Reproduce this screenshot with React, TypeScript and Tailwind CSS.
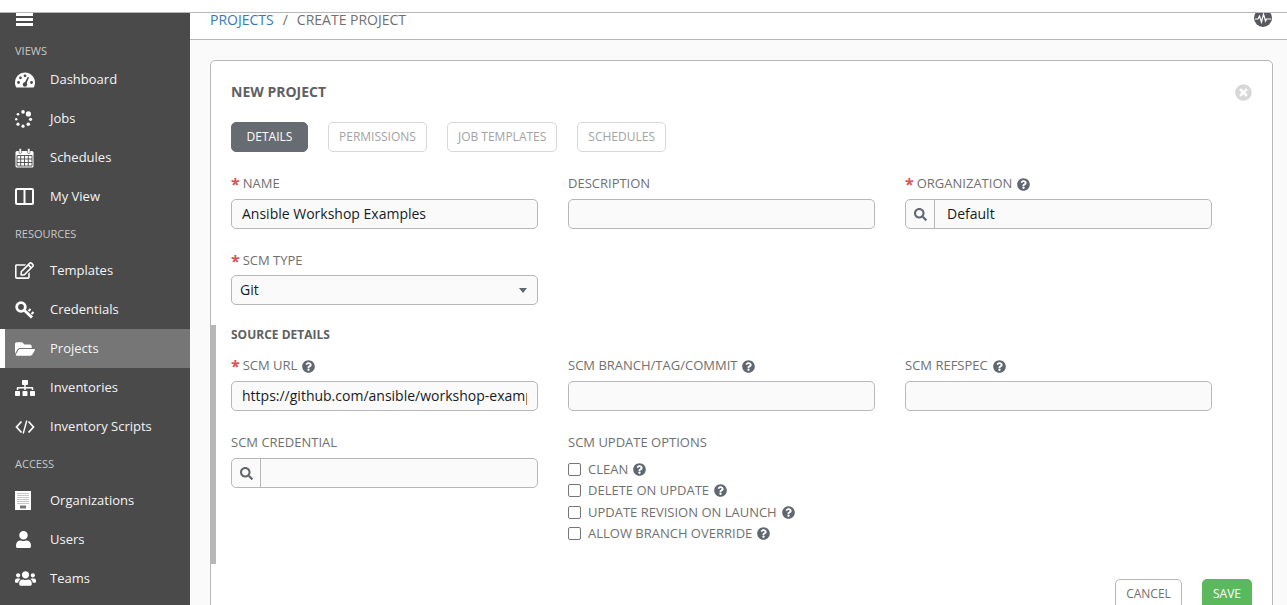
import type { ReactNode } from "react";
import {
  FaFolderOpen,
  FaQuestionCircle,
  FaRegEdit,
  FaSearch,
  FaSitemap,
  FaTimesCircle,
  FaUser,
  FaUsers,
} from "react-icons/fa";

function GaugeIcon() {
  return (
    <svg width="20" height="16" viewBox="0 0 20 16">
      <path d="M10 0.500C4.500 0.500 0 5 0 10.500C0 12.500 0.500 14.300 1.400 15.500H18.600C19.500 14.300 20 12.500 20 10.500C20 5 15.500 0.500 10 0.500Z" fill="#fff" />
      <g fill="#4a4a4a">
        <circle cx="3.500" cy="10.500" r="1.400" />
        <circle cx="5.500" cy="5.800" r="1.400" />
        <circle cx="10" cy="3.800" r="1.400" />
        <circle cx="16.500" cy="10.500" r="1.400" />
        <circle cx="10" cy="12.500" r="2.200" />
        <path d="M9 12L12.800 4.800L14 5.400L11 12.800Z" />
      </g>
    </svg>
  );
}

function SpinnerIcon() {
  return (
    <svg width="18" height="18" viewBox="0 0 18 18" fill="#fff">
      <circle cx="8" cy="1.900" r="1.800" />
      <circle cx="13.400" cy="3.900" r="2.600" />
      <circle cx="15.500" cy="9.300" r="1.600" />
      <circle cx="13.300" cy="14.200" r="1.800" />
      <circle cx="8" cy="16.200" r="1.600" />
      <circle cx="3" cy="14.200" r="1.600" />
      <circle cx="1.200" cy="9.300" r="1.200" />
      <circle cx="3" cy="4.300" r="1.300" />
    </svg>
  );
}

function CalendarIcon() {
  return (
    <svg width="19" height="20" viewBox="0 0 19 20" fill="none">
      <rect x="0.5" y="3" width="18" height="16.5" rx="1.5" fill="#fff" />
      <rect x="4" y="0.5" width="2.5" height="5" rx="1" fill="#fff" stroke="#4a4a4a" strokeWidth="0.6" />
      <rect x="12.5" y="0.5" width="2.5" height="5" rx="1" fill="#fff" stroke="#4a4a4a" strokeWidth="0.6" />
      <path
        d="M2 7.5h15v10.5h-15zM2 11h15M2 14.5h15M5.7 7.5v10.5M9.5 7.5v10.5M13.3 7.5v10.5"
        stroke="#4a4a4a"
        strokeWidth="0.9"
      />
    </svg>
  );
}

function ColumnsIcon() {
  return (
    <svg width="19" height="17" viewBox="0 0 19 17" fill="none">
      <rect x="1" y="1" width="17" height="15" rx="1" stroke="#fff" strokeWidth="2" />
      <path d="M9.5 1v15" stroke="#fff" strokeWidth="2" />
    </svg>
  );
}

function KeyIcon() {
  return (
    <svg width="19" height="18" viewBox="0 0 19 18" fill="none">
      <circle cx="6" cy="6" r="4.300" stroke="#fff" strokeWidth="2.800" />
      <path d="M9 9L17 16.500" stroke="#fff" strokeWidth="3" />
      <path d="M13.500 10L15.500 8M16.500 13L18.500 11" stroke="#fff" strokeWidth="2" />
    </svg>
  );
}

function CodeIcon() {
  return (
    <svg width="20" height="14" viewBox="0 0 20 14" fill="none" stroke="#fff" strokeWidth="1.700">
      <path d="M6.500 1.500L1.500 7L6.500 12.500" />
      <path d="M13.500 1.500L18.500 7L13.500 12.500" />
      <path d="M11.800 0.500L8.200 13.500" strokeWidth="1.400" />
    </svg>
  );
}

function BuildingIcon() {
  return (
    <svg width="16" height="19" viewBox="0 0 16 19">
      <rect width="16" height="19" fill="#fff" />
      <path
        d="M2.500 2.500h11M2.500 4.500h11M2.500 6.500h11M2.500 8.500h11M2.500 10.500h11M2.500 12.500h11"
        stroke="#8a8a8a"
        strokeWidth="1"
        strokeDasharray="1 1"
      />
      <rect x="5" y="14.500" width="6" height="3" fill="#777" />
    </svg>
  );
}

function PulseIcon() {
  return (
    <svg width="18" height="18" viewBox="0 0 18 18" className="block">
      <circle cx="9" cy="9" r="9" fill="#58595f" />
      <path d="M1 10h3l1.500-3 2 6 2-8 2 7 1-2h4.500" fill="none" stroke="#fff" strokeWidth="1.200" />
    </svg>
  );
}

function SectionLabel({ children, className }: { children: ReactNode; className: string }) {
  return <div className={`px-[15px] text-[11px] leading-[16px] text-[#c8c8c8] ${className}`}>{children}</div>;
}

function NavItem({ icon, label, active }: { icon: ReactNode; label: string; active?: boolean }) {
  return (
    <div
      className={`flex h-[39px] items-center text-[13px] text-[#f4f4f4] ${
        active ? "border-l-[5px] border-white bg-[#767676] pl-[10px]" : "pl-[15px]"
      }`}
    >
      <span className="flex w-[35px] shrink-0 items-center">{icon}</span>
      <span>{label}</span>
    </div>
  );
}

function Help() {
  return <FaQuestionCircle className="ml-[5px] inline-block text-[13px] text-[#606770]" />;
}

function Label({ text, required, help }: { text: string; required?: boolean; help?: boolean }) {
  return (
    <div className="flex h-[16px] items-center text-[13px] text-[#707070]">
      {required && <span className="mr-[3px] text-[16px] font-bold leading-none text-[#d9534f]">*</span>}
      <span>{text}</span>
      {help && <Help />}
    </div>
  );
}

function TextField({ value }: { value?: string }) {
  return (
    <input
      readOnly
      value={value ?? ""}
      className="mt-[7px] block h-[30px] w-full rounded-[5px] border border-[#b7b7b7] bg-[#fafafa] px-[10px] pb-[2px] text-[14px] text-[#161b1f] outline-none"
    />
  );
}

function Lookup({ value }: { value?: string }) {
  return (
    <div className="mt-[7px] flex h-[30px] rounded-[5px] border border-[#b7b7b7] bg-[#fafafa]">
      <span className="flex w-[29px] shrink-0 items-center justify-center border-r border-[#b7b7b7]">
        <FaSearch className="text-[13px] text-[#606770]" />
      </span>
      <span className="flex items-center pb-[2px] pl-[12px] text-[14px] text-[#161b1f]">{value}</span>
    </div>
  );
}

function Tab({ label, active }: { label: string; active?: boolean }) {
  return (
    <span
      className={`flex h-[30px] items-center justify-center rounded-[5px] border text-[12px] ${
        active ? "w-[77px] border-[#676b72] bg-[#676b72] text-white" : "border-[#d7d7d7] bg-white px-[10px] text-[#a3a3a3]"
      }`}
    >
      {label}
    </span>
  );
}

function Option({ label }: { label: string }) {
  return (
    <label className="flex h-[21.500px] items-center text-[13px] text-[#707070]">
      <input type="checkbox" className="mr-[7px] size-[13px] appearance-none rounded-[2px] border border-[#767676] bg-white" />
      <span>{label}</span>
      <Help />
    </label>
  );
}

export default function App() {
  return (
    <div className="flex h-[605px] flex-col overflow-hidden bg-white font-['Open_Sans',sans-serif]">
      <div className="h-[13px] shrink-0 border-b border-[#b7b7b7] bg-white" />
      <div className="flex min-h-0 flex-1">
        <aside className="w-[190px] shrink-0 bg-[#4a4a4a]">
          <div className="ml-[16px] flex h-[13px] w-[17px] flex-col gap-[2px]">
            <span className="h-[3px] bg-white" />
            <span className="h-[3px] bg-white" />
            <span className="h-[3px] bg-white" />
          </div>
          <SectionLabel className="mt-[17px]">VIEWS</SectionLabel>
          <div className="mt-[1px]">
            <NavItem icon={<GaugeIcon />} label="Dashboard" />
            <NavItem icon={<SpinnerIcon />} label="Jobs" />
            <NavItem icon={<CalendarIcon />} label="Schedules" />
            <NavItem icon={<ColumnsIcon />} label="My View" />
          </div>
          <SectionLabel className="mt-[10px]">RESOURCES</SectionLabel>
          <div className="mt-[9px]">
            <NavItem icon={<FaRegEdit className="text-[19px] text-white" />} label="Templates" />
            <NavItem icon={<KeyIcon />} label="Credentials" />
            <NavItem active icon={<FaFolderOpen className="text-[20px] text-white" />} label="Projects" />
            <NavItem icon={<FaSitemap className="text-[20px] text-white" />} label="Inventories" />
            <NavItem icon={<CodeIcon />} label="Inventory Scripts" />
          </div>
          <SectionLabel className="mt-[10px]">ACCESS</SectionLabel>
          <div className="mt-[9px]">
            <NavItem icon={<BuildingIcon />} label="Organizations" />
            <NavItem icon={<FaUser className="text-[17px] text-white" />} label="Users" />
            <NavItem icon={<FaUsers className="text-[21px] text-white" />} label="Teams" />
          </div>
        </aside>
        <main className="min-w-0 flex-1 bg-[#fafafa]">
          <div className="flex h-[27px] justify-between border-b border-[#b7b7b7] bg-white pl-[20px] pr-[15px] text-[14px] leading-[14px]">
            <div className="flex h-[14px] items-center">
              <span className="text-[#337ab7]">PROJECTS</span>
              <span className="mx-[9px] text-[#707070]">/</span>
              <span className="text-[#707070]">CREATE PROJECT</span>
            </div>
            <div className="h-[26px] overflow-hidden">
              <div className="-mt-[4px]">
                <PulseIcon />
              </div>
            </div>
          </div>
          <div className="ml-[20px] mr-[14px] mt-[20px] rounded-t-[5px] border border-[#b7b7b7] bg-white px-[20px] pb-[20px] pt-[21px]">
            <div className="flex items-center justify-between">
              <h2 className="text-[14px] font-bold leading-[20px] text-[#606060]">NEW PROJECT</h2>
              <FaTimesCircle className="text-[17px] text-[#d7d7d7]" />
            </div>
            <div className="mt-[20px] flex gap-[20px]">
              <Tab active label="DETAILS" />
              <Tab label="PERMISSIONS" />
              <Tab label="JOB TEMPLATES" />
              <Tab label="SCHEDULES" />
            </div>
            <div className="mt-[24px] grid w-[981px] grid-cols-[307px_307px_307px] gap-x-[30px]">
              <div>
                <Label required text="NAME" />
                <TextField value="Ansible Workshop Examples" />
              </div>
              <div>
                <Label text="DESCRIPTION" />
                <TextField />
              </div>
              <div>
                <Label required help text="ORGANIZATION" />
                <Lookup value="Default" />
              </div>
            </div>
            <div className="mt-[24px] w-[307px]">
              <Label required text="SCM TYPE" />
              <div className="relative mt-[6px]">
                <select className="block h-[30px] w-full appearance-none rounded-[5px] border border-[#b7b7b7] bg-[#fafafa] px-[8px] pb-[2px] text-[14px] text-[#161b1f] outline-none">
                  <option>Git</option>
                </select>
                <span className="absolute right-[11px] top-[13px] border-x-[4px] border-t-[5px] border-x-transparent border-t-[#606770]" />
              </div>
            </div>
            <section className="-ml-[20px] mt-[20px] h-[239px] border-l-[5px] border-[#b7b7b7] pl-[15px] pt-[2px]">
              <h3 className="text-[12px] font-bold leading-[16px] text-[#606060]">SOURCE DETAILS</h3>
              <div className="mt-[15px] grid w-[981px] grid-cols-[307px_307px_307px] gap-x-[30px]">
                <div>
                  <Label required help text="SCM URL" />
                  <TextField value="https://github.com/ansible/workshop-examples.git" />
                </div>
                <div>
                  <Label help text="SCM BRANCH/TAG/COMMIT" />
                  <TextField />
                </div>
                <div>
                  <Label help text="SCM REFSPEC" />
                  <TextField />
                </div>
                <div className="mt-[24px]">
                  <Label text="SCM CREDENTIAL" />
                  <Lookup />
                </div>
                <div className="mt-[24px]">
                  <Label text="SCM UPDATE OPTIONS" />
                  <div className="mt-[7.500px]">
                    <Option label="CLEAN" />
                    <Option label="DELETE ON UPDATE" />
                    <Option label="UPDATE REVISION ON LAUNCH" />
                    <Option label="ALLOW BRANCH OVERRIDE" />
                  </div>
                </div>
              </div>
            </section>
            <div className="mt-[15px] flex justify-end gap-[20px]">
              <button className="h-[30px] w-[67px] rounded-[5px] border border-[#b7b7b7] bg-white text-[12px] text-[#707070]">
                CANCEL
              </button>
              <button className="h-[30px] w-[50px] rounded-[5px] bg-[#5cb85c] text-[12px] text-white">SAVE</button>
            </div>
          </div>
        </main>
      </div>
    </div>
  );
}
